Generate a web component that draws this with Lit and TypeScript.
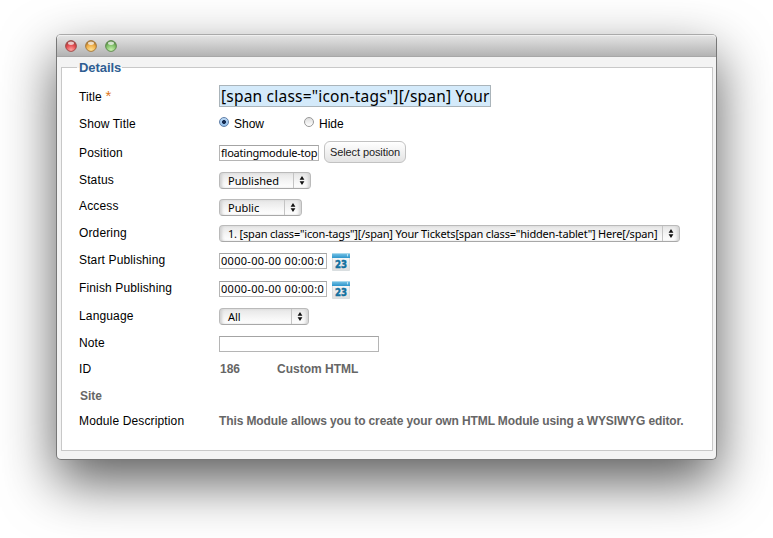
import { LitElement, html, css, svg } from "lit";
import { customElement, property } from "lit/decorators.js";
import { styleMap } from "lit/directives/style-map.js";

@customElement("mac-select")
class MacSelect extends LitElement {
  @property() value = "";
  @property({ type: Number }) width = 90;
  static styles = css`
    :host { display: block; margin-top: 2px; }
    .select {
      box-sizing: border-box; height: 17px; display: flex; align-items: stretch;
      border: 1px solid #bababa; border-bottom-color: #a8a8a8; border-radius: 4px;
      background: linear-gradient(#e6e6e6, #f5f5f5 55%, #fff);
      box-shadow: inset 3px 0 3px -1px #d0d0d0, inset -3px 0 3px -1px #d4d4d4;
      font: 11px/15px "Noto Sans", "Open Sans", sans-serif; color: #000;
    }
    .value { flex: 1; padding-left: 8px; white-space: nowrap; letter-spacing: var(--track, 0); }
    .arrows { width: 16px; border-left: 1px solid #c4c4c4; display: flex; align-items: center; justify-content: center; }
  `;
  render() {
    return html`<div class="select" style=${styleMap({ width: `${this.width}px` })}>
      <span class="value">${this.value}</span>
      <span class="arrows"><svg width="6" height="9" viewBox="0 0 6 9"><path d="M3 0L5.4 3.7H.6zM3 9L.6 5.3h4.8z" fill="#111" /></svg></span>
    </div>`;
  }
}

@customElement("calendar-icon")
class CalendarIcon extends LitElement {
  static styles = css`:host { display: block; width: 18px; height: 18px; margin: 4px 0 0 5px; } svg { display: block; }
    text { font: bold 10px "DejaVu Sans", sans-serif; }`;
  render() {
    return html`<svg width="18" height="18" viewBox="0 0 18 18">
      <defs>
        <linearGradient id="top" x2="0" y2="1"><stop stop-color="#7cc6e8" /><stop offset="1" stop-color="#2d95cb" /></linearGradient>
        <linearGradient id="page" x2="0" y2="1"><stop stop-color="#fff" /><stop offset="1" stop-color="#dedede" /></linearGradient>
      </defs>
      <path d="M.5 .5h17v17H.5z" fill="url(#page)" stroke="#d9dee0" />
      <path d="M0 0h18v5H0z" fill="url(#top)" />
      <path d="M0 .5h18" stroke="#a9d8ec" />
      <path d="M15.5 1v2.4" stroke="#b9e2f3" />
      <text x="3" y="14.6" textLength="12" lengthAdjust="spacingAndGlyphs" fill="#12719f" stroke="#12719f" stroke-width=".5">23</text>
    </svg>`;
  }
}

@customElement("app-root")
class AppRoot extends LitElement {
  static styles = css`
    :host { display: block; box-sizing: border-box; width: 773px; height: 538px; padding: 34px 0 0 56px; overflow: hidden; background: #fff;
      font: 12px/16px "Liberation Sans", Arial, sans-serif; color: #000; }
    .window { box-sizing: border-box; width: 661px; height: 426px; border: 1px solid #777; border-top-color: #aaa; border-radius: 5px;
      background: #f3f3f3; box-shadow: 0 22px 54px rgba(0, 0, 0, .64); display: flex; flex-direction: column; }
    .bar { height: 22px; flex: none; box-sizing: border-box; border-bottom: 1px solid #a7a7a7; border-radius: 4px 4px 0 0;
      background: linear-gradient(#e5e5e5, #b3b3b3); box-shadow: inset 0 1px #f0f0f0; display: flex; align-items: center; gap: 8px; padding-left: 8px; }
    .bar svg { display: block; }
    .group { position: relative; box-sizing: border-box; width: 652px; height: 384px; margin: 10px 0 0 4px; border: 1px solid #c8c8c8; background: #fff; padding: 15px 0 0 17px; }
    .legend { position: absolute; left: 15px; top: -8px; padding: 0 1px 0 2px; font-size: 13px; font-weight: bold; color: #2f5e92;
      background: linear-gradient(#f3f3f3 8px, #fff 8px); letter-spacing: -.05px; }
    .rows { display: grid; grid-template-rows: 27px 28px 29px 26px 26px 27px 27px 29px 27px 27px 26px 27px 24px; }
    .row { display: grid; grid-template-columns: 140px 1fr; align-items: center; min-height: 0; }
    .label { letter-spacing: .14px; white-space: nowrap; }
    .row:last-child { margin-top: -1px; }
    .star { color: #e0751c; font-size: 15px; line-height: 12px; }
    .cell { display: flex; align-items: center; }
    .field { box-sizing: border-box; height: 16px; border: 1px solid #b5b5b5; border-top-color: #a4a4a4; background: #fff; padding-left: 1px;
      font: 11px/14px "Noto Sans", "Open Sans", sans-serif; white-space: nowrap; }
    .title { width: 272px; height: 22px; margin-top: -1px; border-color: #aab4ba; background: #d4eafa; font-size: 15.5px; line-height: 20px; letter-spacing: .21px; }
    .pos { width: 100px; margin-top: 1px; letter-spacing: -.22px; }
    .date { width: 108px; letter-spacing: .3px; margin-top: 3px; }
    .note { width: 160px; margin-top: 3px; }
    .radio { box-sizing: border-box; width: 10px; height: 10px; border: 1px solid #999; border-radius: 50%; background: linear-gradient(#ddd, #fff); margin-bottom: 4px; }
    .radio.on { border-color: #5f7fa8; background: radial-gradient(#142a50 0 1.6px, transparent 2.3px), linear-gradient(#bcd8f4, #8fbce8); }
    .option { margin-left: 5px; }
    .show { width: 70px; }
    .button { box-sizing: border-box; width: 82px; height: 22px; margin: -2px 0 0 5px; border: 1px solid #c2c2c2; border-radius: 6px; background: linear-gradient(#fff, #e4e4e4);
      text-align: center; font-size: 11px; line-height: 20px; letter-spacing: -.1px; color: #222; white-space: nowrap; }
    .strong { font-weight: bold; color: #666; letter-spacing: 0; white-space: nowrap; }
    .about { letter-spacing: -.12px; }
    .id { width: 58px; padding-left: 1px; box-sizing: border-box; }
    .site { padding-left: 1px; }
    .long { --track: -.18px; }
    .status { margin-top: 0; }
  `;

  light(id: string, dark: string, mid: string, pale: string) {
    return html`<svg width="12" height="12" viewBox="0 0 12 12">
      <defs><radialGradient id=${id} cx=".5" cy=".9" r=".8"><stop stop-color=${pale} /><stop offset=".65" stop-color=${mid} /><stop offset="1" stop-color=${dark} /></radialGradient></defs>
      ${svg`<circle cx="6" cy="6" r="5.4" fill=${`url(#${id})`} stroke=${dark} stroke-width=".9" />`}
      <ellipse cx="6" cy="3.2" rx="3" ry="1.7" fill="#fff" opacity=".7" />
    </svg>`;
  }

  row(label: unknown, content: unknown) {
    return html`<div class="row"><span class="label">${label}</span><div class="cell">${content}</div></div>`;
  }

  render() {
    const zero = "0000-00-00 00:00:0";
    return html`<div class="window">
      <div class="bar">
        ${this.light("red", "#9c4643", "#e3484d", "#ffaaa5")}
        ${this.light("amber", "#a37434", "#efac44", "#ffe59a")}
        ${this.light("green", "#5a8748", "#80c068", "#ccf4b2")}
      </div>
      <div class="group">
        <span class="legend">Details</span>
        <div class="rows">
          ${this.row(html`Title <span class="star">*</span>`, html`<div class="field title">[span class="icon-tags"][/span] Your</div>`)}
          ${this.row("Show Title", html`<span class="radio on"></span><span class="option show">Show</span><span class="radio"></span><span class="option">Hide</span>`)}
          ${this.row("Position", html`<div class="field pos">floatingmodule-top</div><div class="button">Select position</div>`)}
          ${this.row("Status", html`<mac-select class="status" value="Published" width="92"></mac-select>`)}
          ${this.row("Access", html`<mac-select value="Public" width="83"></mac-select>`)}
          ${this.row("Ordering", html`<mac-select class="long" width="461" value=${'1. [span class="icon-tags"][/span] Your Tickets[span class="hidden-tablet"] Here[/span]'}></mac-select>`)}
          ${this.row("Start Publishing", html`<div class="field date">${zero}</div><calendar-icon></calendar-icon>`)}
          ${this.row("Finish Publishing", html`<div class="field date">${zero}</div><calendar-icon></calendar-icon>`)}
          ${this.row("Language", html`<mac-select value="All" width="90"></mac-select>`)}
          ${this.row("Note", html`<div class="field note"></div>`)}
          ${this.row("ID", html`<span class="strong id">186</span><span class="strong">Custom HTML</span>`)}
          ${this.row(html`<span class="strong site">Site</span>`, "")}
          ${this.row("Module Description", html`<span class="strong about">This Module allows you to create your own HTML Module using a WYSIWYG editor.</span>`)}
        </div>
      </div>
    </div>`;
  }
}
